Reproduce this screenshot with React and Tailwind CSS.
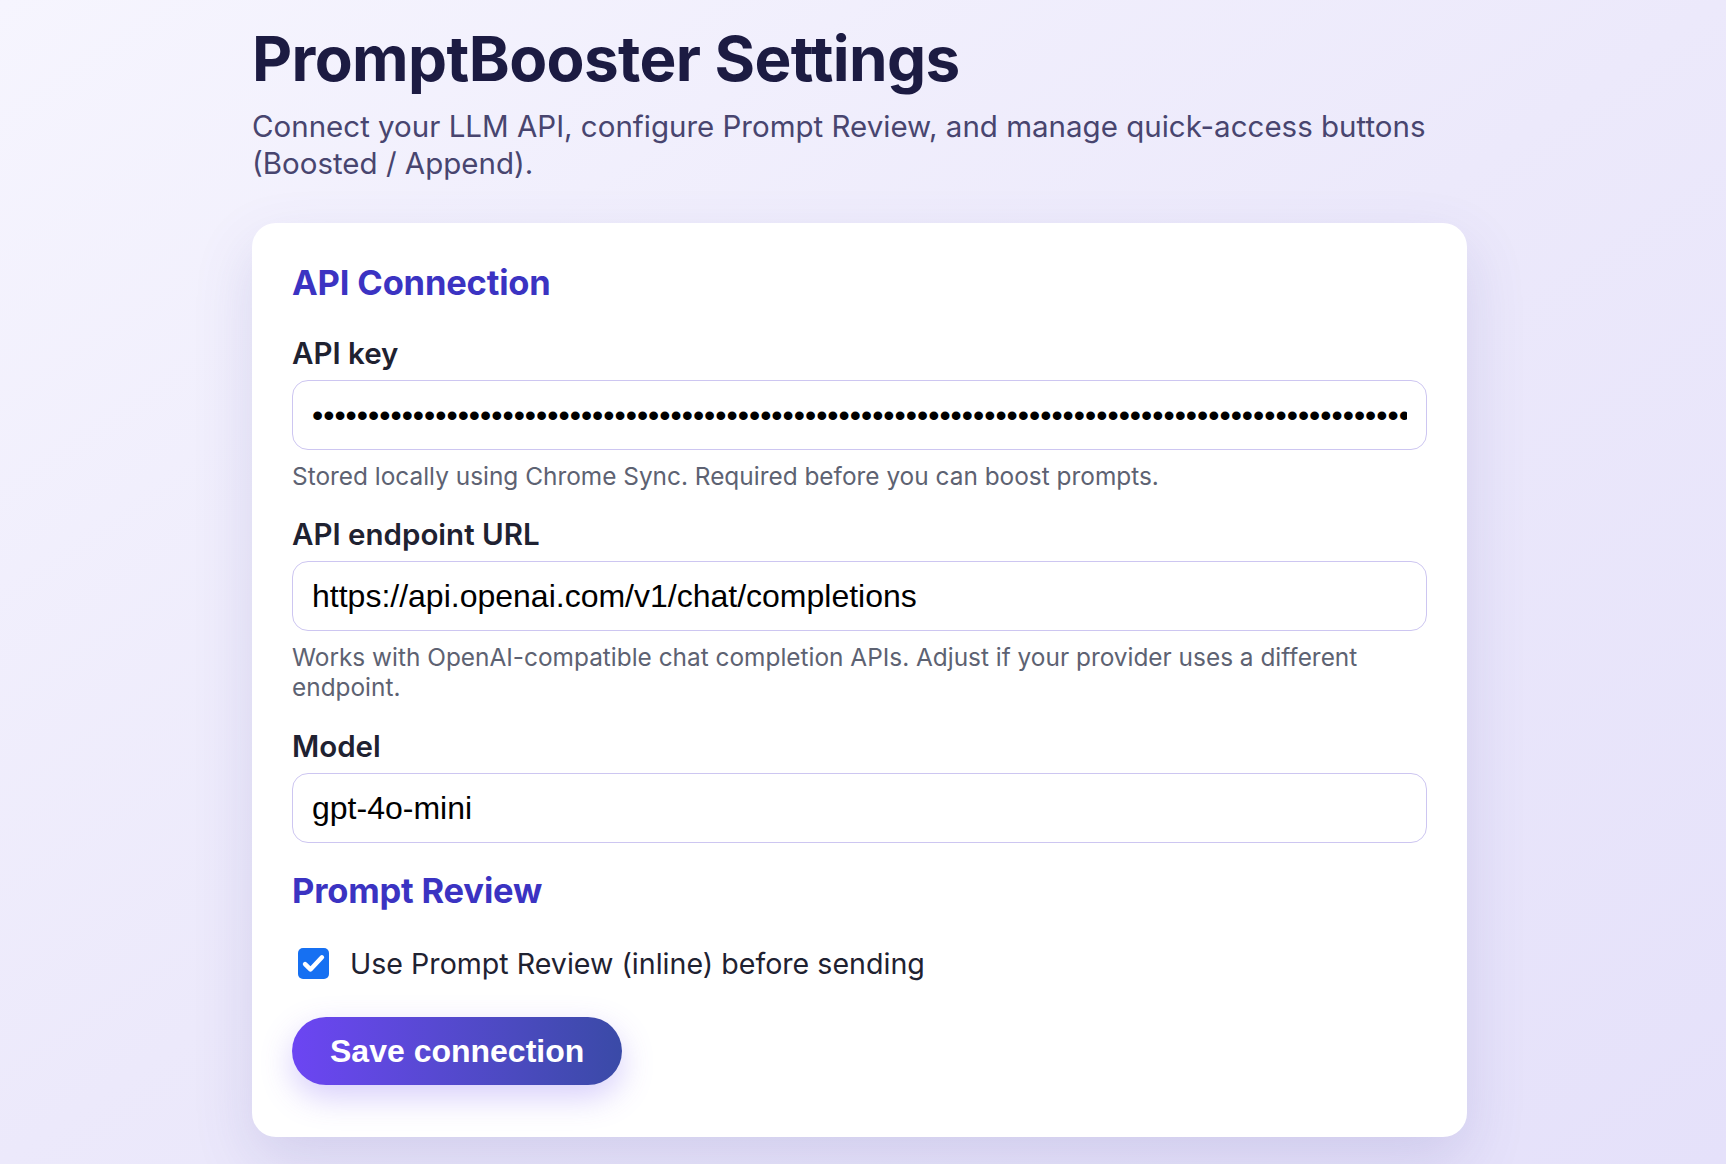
import React from "react";

const inter = "font-['Inter',sans-serif]";
const mono = "font-['Liberation_Sans',Arial,sans-serif]";

const Field = ({ label, type = "text", value, help, className = "" }) => (
  <div className={className}>
    <label className="block text-[29.5px] font-semibold leading-[36px] text-[#1f2231]">
      {label}
    </label>
    <input
      type={type}
      defaultValue={value}
      readOnly
      className={`mt-[9px] block h-[70px] w-full rounded-[16px] border-[1.5px] border-[#cdc6f1] bg-white px-[19px] text-[32px] text-black outline-none ${mono}`}
    />
    {help && (
      <p className="mt-[11px] text-[24.4px] leading-[30px] text-[#5d6272]">{help}</p>
    )}
  </div>
);

const CheckIcon = () => (
  <svg viewBox="0 0 24 24" className="h-[27px] w-[27px]" fill="none">
    <path
      d="M4.5 12.5l4.8 4.8L19.5 6.5"
      stroke="white"
      strokeWidth="4"
      strokeLinecap="round"
      strokeLinejoin="round"
    />
  </svg>
);

export default function App() {
  const apiKey = "sk-proj-" + "x".repeat(130);

  return (
    <div
      className={`min-h-screen bg-linear-to-br from-[#f6f5fe] via-[#ece9fb] to-[#e5e1fa] ${inter}`}
    >
      <div className="flex justify-center pr-[7px]">
        <main className="w-[1215px] pt-[22px] pb-[28px]">
          <h1 className="text-[62px] font-bold leading-[1.2] tracking-[-0.01em] text-[#1c1b42]">
            PromptBooster Settings
          </h1>
          <p className="mt-[12px] text-[29.5px] leading-[37px] text-[#48456f]">
            Connect your LLM API, configure Prompt Review, and manage quick-access buttons
            (Boosted / Append).
          </p>

          <section className="mt-[41px] rounded-[24px] bg-white px-[40px] pt-[40px] pb-[52px] shadow-[0_24px_60px_rgba(90,80,170,0.16)]">
            <h2 className="text-[34.5px] font-bold leading-[40px] tracking-[-0.005em] text-[#3b33c2]">
              API Connection
            </h2>

            <Field
              className="mt-[32px]"
              label="API key"
              type="password"
              value={apiKey}
              help="Stored locally using Chrome Sync. Required before you can boost prompts."
            />
            <Field
              className="mt-[25px]"
              label="API endpoint URL"
              value="https://api.openai.com/v1/chat/completions"
              help="Works with OpenAI-compatible chat completion APIs. Adjust if your provider uses a different endpoint."
            />
            <Field className="mt-[26px]" label="Model" value="gpt-4o-mini" />

            <h2 className="mt-[28px] text-[34.5px] font-bold leading-[40px] tracking-[-0.005em] text-[#3b33c2]">
              Prompt Review
            </h2>

            <label className="mt-[35px] flex items-center gap-[21px] pl-[6px]">
              <span className="flex h-[31px] w-[31px] items-center justify-center rounded-[5px] bg-[#1670f2]">
                <CheckIcon />
              </span>
              <span className="text-[28.6px] leading-[35px] text-[#1f2231]">
                Use Prompt Review (inline) before sending
              </span>
            </label>

            <button
              type="button"
              className={`mt-[36px] h-[68px] rounded-full bg-linear-to-r from-[#6c45f3] to-[#3a4aa7] px-[38px] text-[32px] font-bold text-white shadow-[0_12px_32px_rgba(110,80,240,0.28)] ${mono}`}
            >
              Save connection
            </button>
          </section>
        </main>
      </div>
    </div>
  );
}
